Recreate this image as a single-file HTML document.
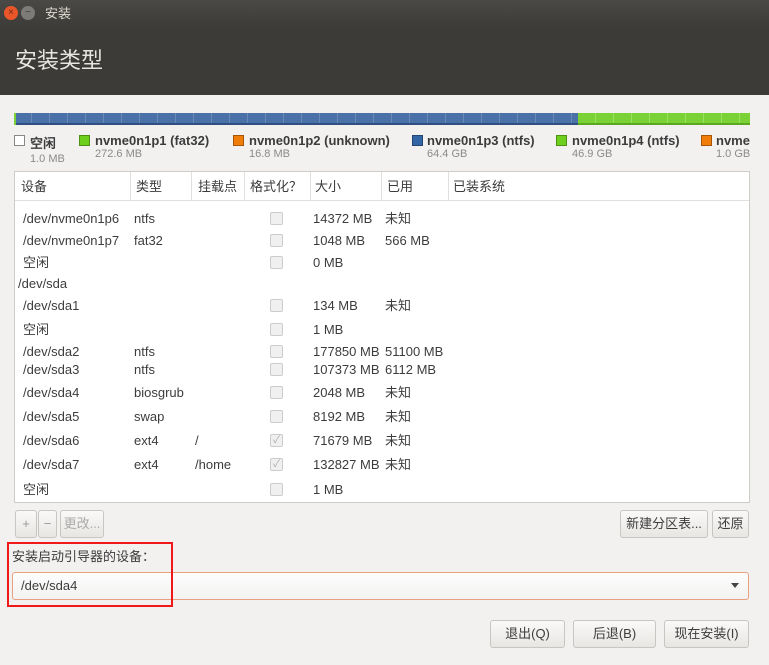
<!DOCTYPE html>
<html><head><meta charset="utf-8"><style>
*{box-sizing:border-box;margin:0;padding:0}
body{width:769px;height:665px;overflow:hidden;background:#f2f1f0;font-family:"Liberation Sans","Noto Sans CJK SC",sans-serif;font-size:13px;line-height:16px;color:#3c3c3c;position:relative}
.a{position:absolute;white-space:nowrap}
.tb{left:0;top:0;width:769px;height:28px;background:linear-gradient(#4a4945,#3c3b37)}
.hd{left:0;top:28px;width:769px;height:67px;background:#3c3b37}
.cb{width:13px;height:13px;border:1px solid #ccc;border-radius:2px;background:#f0f0f0}
.btn{border:1px solid #c8c6c2;border-radius:3px;background:linear-gradient(#faf9f8,#e8e6e3);text-align:center;line-height:26px;height:28px}
.sw{width:11px;height:11px;border:1px solid rgba(0,0,0,.3)}
.lg{font-weight:bold;font-size:13px;color:#3c3c3c}
.sz{font-size:11px;color:#8a8a8a;line-height:12px}
</style></head><body>
<div class="a tb"></div>
<div class="a" style="left:4px;top:6px;width:14px;height:14px;border-radius:7px;background:#e9562a;color:#6b2a12;font-size:10px;line-height:14px;text-align:center">×</div>
<div class="a" style="left:21px;top:6px;width:14px;height:14px;border-radius:7px;background:#7c7b77;color:#3c3b37;font-size:10px;line-height:14px;text-align:center">−</div>
<div class="a" style="left:45px;top:6px;color:#dfdbd2;font-size:13px">安装</div>
<div class="a hd"></div>
<div class="a" style="left:15px;top:48px;color:#e8e6e1;font-size:22px;line-height:26px">安装类型</div>
<div class="a" style="left:14px;top:113px;width:736px;height:12px;background:repeating-linear-gradient(90deg,#4a72a8 0,#4a72a8 17px,#6a8ab8 17px,#6a8ab8 18px);border-bottom:2px solid #2f4f80"></div>
<div class="a" style="left:578px;top:113px;width:172px;height:12px;background:repeating-linear-gradient(90deg,#7ad236 0,#7ad236 17px,#98e060 17px,#98e060 18px);border-bottom:2px solid #5aa820"></div>
<div class="a" style="left:14px;top:113px;width:2px;height:12px;background:#7ad236"></div>
<div class="a cb" style="left:14px;top:135px;width:11px;height:11px;background:#fff;border-color:#888;border-radius:0"></div>
<div class="a lg" style="left:30px;top:136px">空闲</div><div class="a sz" style="left:30px;top:153px">1.0 MB</div>
<div class="a sw" style="left:79px;top:135px;background:#6fcf1e"></div><div class="a lg" style="left:95px;top:133px">nvme0n1p1 (fat32)</div><div class="a sz" style="left:95px;top:148px">272.6 MB</div>
<div class="a sw" style="left:233px;top:135px;background:#f07c0a"></div><div class="a lg" style="left:249px;top:133px">nvme0n1p2 (unknown)</div><div class="a sz" style="left:249px;top:148px">16.8 MB</div>
<div class="a sw" style="left:412px;top:135px;background:#3465a4"></div><div class="a lg" style="left:427px;top:133px">nvme0n1p3 (ntfs)</div><div class="a sz" style="left:427px;top:148px">64.4 GB</div>
<div class="a sw" style="left:556px;top:135px;background:#6fcf1e"></div><div class="a lg" style="left:572px;top:133px">nvme0n1p4 (ntfs)</div><div class="a sz" style="left:572px;top:148px">46.9 GB</div>
<div class="a sw" style="left:701px;top:135px;background:#f07c0a"></div><div class="a lg" style="left:716px;top:133px">nvme</div><div class="a sz" style="left:716px;top:148px">1.0 GB</div>
<div class="a" style="left:750px;top:100px;width:19px;height:70px;background:#f2f1f0"></div>
<div class="a" style="left:14px;top:171px;width:736px;height:332px;background:#fff;border:1px solid #cfcdc9"></div>
<div class="a" style="left:15px;top:172px;width:734px;height:29px;border-bottom:1px solid #e2e0dc"></div>
<div class="a" style="left:130px;top:172px;width:1px;height:29px;background:#e2e0dc"></div>
<div class="a" style="left:191px;top:172px;width:1px;height:29px;background:#e2e0dc"></div>
<div class="a" style="left:244px;top:172px;width:1px;height:29px;background:#e2e0dc"></div>
<div class="a" style="left:310px;top:172px;width:1px;height:29px;background:#e2e0dc"></div>
<div class="a" style="left:381px;top:172px;width:1px;height:29px;background:#e2e0dc"></div>
<div class="a" style="left:448px;top:172px;width:1px;height:29px;background:#e2e0dc"></div>
<div class="a" style="left:21px;top:179px">设备</div><div class="a" style="left:136px;top:179px">类型</div><div class="a" style="left:198px;top:179px">挂载点</div><div class="a" style="left:250px;top:179px">格式化？</div><div class="a" style="left:315px;top:179px">大小</div><div class="a" style="left:387px;top:179px">已用</div><div class="a" style="left:453px;top:179px">已装系统</div>
<div id="rows"></div>
<div class="a btn" style="left:15px;top:510px;width:22px;color:#999">+</div>
<div class="a btn" style="left:38px;top:510px;width:19px;color:#999">−</div>
<div class="a btn" style="left:60px;top:510px;width:44px;color:#aaa">更改...</div>
<div class="a btn" style="left:620px;top:510px;width:88px">新建分区表...</div>
<div class="a btn" style="left:712px;top:510px;width:37px">还原</div>
<div class="a" style="left:12px;top:549px">安装启动引导器的设备：</div>
<div class="a" style="left:12px;top:572px;width:737px;height:28px;border:1px solid #e8a080;border-radius:3px;background:linear-gradient(#fdfdfd,#f3f2f1)"></div>
<div class="a" style="left:21px;top:578px">/dev/sda4</div>
<div class="a" style="left:731px;top:583px;width:0;height:0;border-left:4px solid transparent;border-right:4px solid transparent;border-top:5px solid #444"></div>
<div class="a" style="left:7px;top:542px;width:166px;height:65px;border:2px solid #f01818"></div>
<div class="a btn" style="left:490px;top:620px;width:75px">退出(Q)</div>
<div class="a btn" style="left:573px;top:620px;width:83px">后退(B)</div>
<div class="a btn" style="left:664px;top:620px;width:85px">现在安装(I)</div>
<script>
var r=[[219,"/dev/nvme0n1p6","ntfs","",0,"14372 MB","未知"],[241,"/dev/nvme0n1p7","fat32","",0,"1048 MB","566 MB"],[263,"空闲","","",0,"0 MB",""],[284,"/dev/sda",null],[306,"/dev/sda1","","",0,"134 MB","未知"],[330,"空闲","","",0,"1 MB",""],[352,"/dev/sda2","ntfs","",0,"177850 MB","51100 MB"],[370,"/dev/sda3","ntfs","",0,"107373 MB","6112 MB"],[393,"/dev/sda4","biosgrub","",0,"2048 MB","未知"],[417,"/dev/sda5","swap","",0,"8192 MB","未知"],[441,"/dev/sda6","ext4","/",1,"71679 MB","未知"],[465,"/dev/sda7","ext4","/home",1,"132827 MB","未知"],[490,"空闲","","",0,"1 MB",""]];
var h="";r.forEach(function(x){var t=x[0]-8;if(x[2]===null){h+='<div class="a" style="left:18px;top:'+t+'px">'+x[1]+'</div>';return;}
h+='<div class="a" style="left:23px;top:'+t+'px">'+x[1]+'</div><div class="a" style="left:134px;top:'+t+'px">'+x[2]+'</div><div class="a" style="left:195px;top:'+t+'px">'+x[3]+'</div><div class="a cb" style="left:270px;top:'+(x[0]-7)+'px;font-size:10px;line-height:11px;text-align:center;color:#aaa">'+(x[4]?'✓':'')+'</div><div class="a" style="left:313px;top:'+t+'px">'+x[5]+'</div><div class="a" style="left:385px;top:'+t+'px">'+x[6]+'</div>';});
document.getElementById("rows").innerHTML=h;
</script>
</body></html>
